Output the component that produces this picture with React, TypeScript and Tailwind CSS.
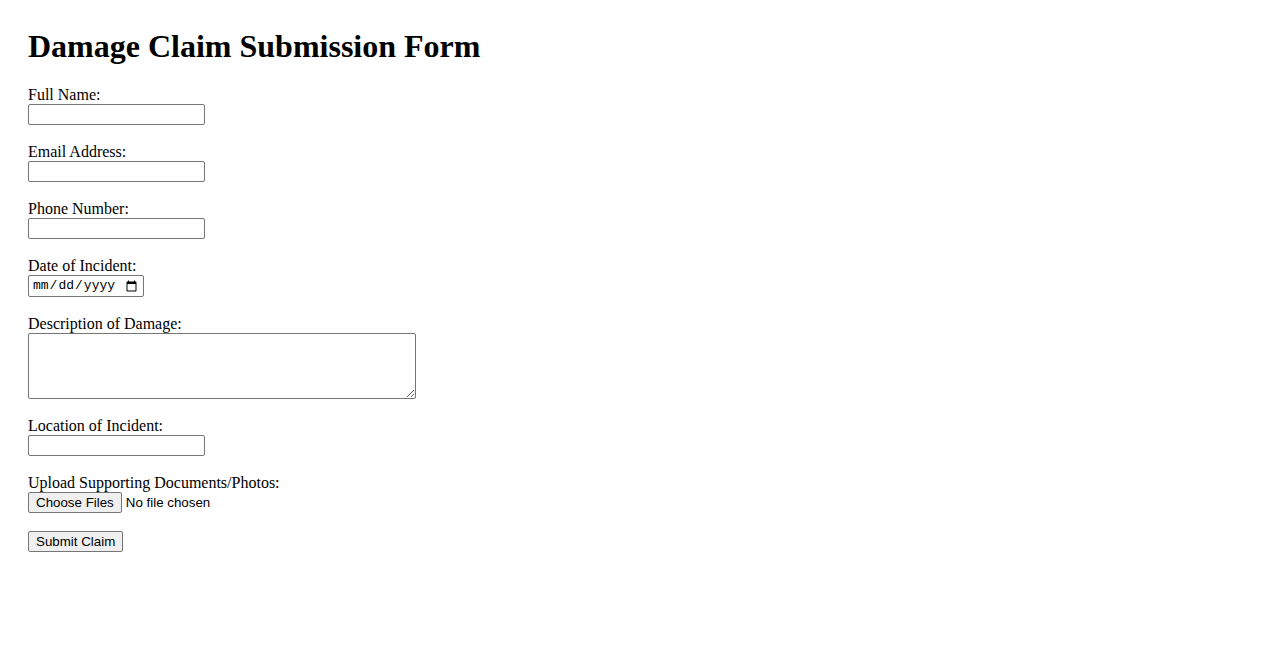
import React from 'react'

const serif = "font-['Liberation_Serif','Times_New_Roman',serif]"
const sans = "font-['Liberation_Sans',Arial,sans-serif]"

function Field({ label, children }: { label: string; children: React.ReactNode }) {
  return (
    <div className="flex flex-col items-start">
      <label className="block text-[16px] leading-[18px] text-black">{label}</label>
      {children}
    </div>
  )
}

const textInput =
  "block h-[21px] w-[177px] rounded-[2px] border border-solid border-[#767676] bg-white px-[2px] text-[13.33px] " + sans

export default function App() {
  return (
    <main className={"min-h-screen bg-white text-black pl-[28px] pt-[28px] " + serif}>
      {/* Header */}
      <h1 className="text-[32px] font-bold leading-[37px] mb-[21px]">Damage Claim Submission Form</h1>

      <form className="flex flex-col gap-[18px]" onSubmit={(e) => e.preventDefault()}>
        <Field label="Full Name:">
          <input type="text" className={textInput} />
        </Field>
        <Field label="Email Address:">
          <input type="email" className={textInput} />
        </Field>
        <Field label="Phone Number:">
          <input type="tel" className={textInput} />
        </Field>
        <Field label="Date of Incident:">
          <input
            type="date"
            className="block h-[22px] w-[116px] rounded-[2px] border border-solid border-[#767676] bg-white px-[3px] text-[13px] font-['Liberation_Mono','Courier_New',monospace]"
          />
        </Field>
        <Field label="Description of Damage:">
          <textarea className="block h-[66px] w-[388px] rounded-[2px] border border-solid border-[#767676] bg-white p-[2px] text-[13px] font-['Liberation_Mono',monospace]" />
        </Field>
        <Field label="Location of Incident:">
          <input type="text" className={textInput} />
        </Field>
        <Field label="Upload Supporting Documents/Photos:">
          <div className="flex h-[21px] items-start overflow-hidden">
            <input
              type="file"
              multiple
              className={
                "block h-[21px] text-[13.33px] leading-[19px] " +
                sans +
                " file:mr-[4px] file:h-[21px] file:px-[7px] file:border file:border-solid file:border-[#767676] file:bg-[#efefef] file:rounded-[2px] file:text-black file:text-[13.33px]"
              }
            />
          </div>
        </Field>
        <div className="flex">
          <button
            type="submit"
            className={
              "block h-[21px] px-[7px] rounded-[2px] border border-solid border-[#767676] bg-[#efefef] text-[13.33px] leading-none text-black " +
              sans
            }
          >
            Submit Claim
          </button>
        </div>
      </form>
    </main>
  )
}
